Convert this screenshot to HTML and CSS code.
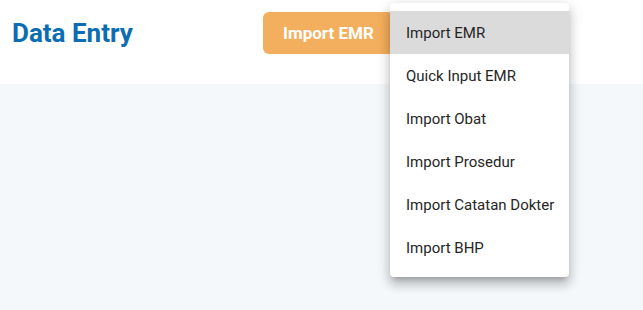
FILE: index.html
```html
<!DOCTYPE html>
<html>
<head>
<meta charset="utf-8">
<link rel="stylesheet" href="styles.css">
</head>
<body>
<header class="header">
  <h1 class="title">Data Entry</h1>
  <div class="import">
    <button class="btn">Import EMR</button>
    <ul class="menu">
      <li class="item active">Import EMR</li>
      <li class="item">Quick Input EMR</li>
      <li class="item">Import Obat</li>
      <li class="item">Import Prosedur</li>
      <li class="item">Import Catatan Dokter</li>
      <li class="item">Import BHP</li>
    </ul>
  </div>
</header>
<main class="content"></main>
</body>
</html>
```
FILE: styles.css
```css
* { box-sizing: border-box; }
html, body { margin: 0; padding: 0; }
body {
  font-family: Roboto, "Noto Sans", sans-serif;
  background: #f5f8fb;
  width: 643px;
  height: 310px;
  overflow: hidden;
}
.header {
  height: 84px;
  background: #ffffff;
  display: flex;
  align-items: center;
  padding: 0 12px;
}
.title {
  margin: 0;
  font-size: 26px;
  font-weight: 700;
  color: #0b6db3;
  width: 251px;
  position: relative;
  top: -9px;
}
.import {
  position: relative;
  top: -9px;
}
.btn {
  font-family: inherit;
  font-size: 17px;
  font-weight: 700;
  color: #ffffff;
  background: #f3af5d;
  border: none;
  border-radius: 6px;
  height: 42px;
  padding: 0 20px;
}
.menu {
  position: absolute;
  left: 127px;
  top: -9px;
  width: 179px;
  margin: 0;
  padding: 8px 0;
  list-style: none;
  background: #ffffff;
  border-radius: 4px;
  box-shadow: 0 5px 5px -3px rgba(0,0,0,0.2), 0 8px 10px 1px rgba(0,0,0,0.14), 0 3px 14px 2px rgba(0,0,0,0.12);
}
.item {
  height: 43px;
  display: flex;
  align-items: center;
  padding: 0 16px;
  font-size: 15px;
  color: #262626;
  white-space: nowrap;
}
.item.active { background: #dbdbdb; }
.content { height: 226px; }
```
